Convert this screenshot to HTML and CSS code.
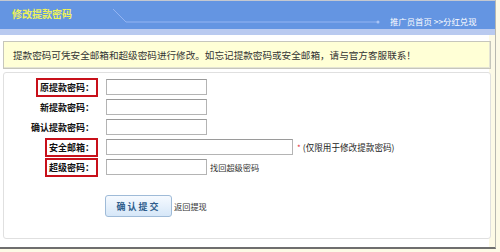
FILE: index.html
```html
<!DOCTYPE html>
<html lang="zh-CN">
<head>
  <meta charset="UTF-8">
  <title>修改提款密码</title>
  <link rel="stylesheet" href="styles.css">
</head>
<body>
  <div class="page">
    <div class="head">
      <h1>修改提款密码</h1>
      <svg class="deco" width="272" height="28" viewBox="0 0 272 28">
        <path d="M3 8 L16 21 L268 21" fill="none" stroke="#93b4f2" stroke-width="1"/>
        <circle cx="268" cy="21" r="1.5" fill="#a9c4f6"/>
      </svg>
      <div class="crumbs">推广员首页 &gt;&gt;分红兑现</div>
    </div>
    <div class="strip"></div>

    <div class="content">
      <div class="notice">提款密码可凭安全邮箱和超级密码进行修改。如忘记提款密码或安全邮箱，请与官方客服联系！</div>

      <div class="panel">
        <div class="form">
          <div class="label"><span class="mark">原提款密码：</span></div>
          <div class="field"><input type="password" class="box"></div>

          <div class="label"><span>新提款密码：</span></div>
          <div class="field"><input type="password" class="box"></div>

          <div class="label"><span>确认提款密码：</span></div>
          <div class="field"><input type="password" class="box"></div>

          <div class="label"><span class="mark">安全邮箱：</span></div>
          <div class="field"><input type="text" class="box wide"><span class="star">*</span><span class="hint">(仅限用于修改提款密码)</span></div>

          <div class="label"><span class="mark">超级密码：</span></div>
          <div class="field"><input type="password" class="box"><a class="link">找回超级密码</a></div>
        </div>

        <div class="actions">
          <button class="submit">确认提交</button>
          <a class="link">返回提现</a>
        </div>
      </div>
    </div>
  </div>
</body>
</html>
```

FILE: styles.css
```css
* {
  margin: 0;
  padding: 0;
  box-sizing: border-box;
}

body {
  background: #fdfae6;
  font-family: "Noto Sans CJK SC", "DejaVu Sans", sans-serif;
  font-size: 9px;
  color: #222;
}

.page {
  width: 496px;
  height: 249px;
  background: #fff;
  border-top: 1px solid #c4c8d0;
  border-right: 1px solid #b8b8b0;
  border-bottom: 2px solid #6e6e6e;
}

.head {
  height: 28px;
  background: #6495e2;
  display: flex;
  align-items: flex-start;
}

.head h1 {
  font-size: 10px;
  font-weight: bold;
  color: #eef25a;
  margin: 6px 0 0 12px;
  line-height: 14px;
}

.deco {
  margin-left: 38px;
  flex: none;
}

.crumbs {
  color: #fff;
  font-size: 8.4px;
  margin: 13px 0 0 8px;
  line-height: 14px;
  white-space: nowrap;
}

.strip {
  height: 6px;
  background: #b9caf0;
}

.content {
  padding: 6px 4px 0 3px;
  background: linear-gradient(90deg, #fff 489px, #fdfae6 489px);
  height: 212px;
}

.notice {
  height: 28px;
  line-height: 26px;
  background: #ffffd6;
  border: 1px solid #c6c6bc;
  box-shadow: inset -1px -1px 0 #e4e4d4;
  padding-left: 9px;
  font-size: 9.6px;
  color: #333;
  white-space: nowrap;
}

.panel {
  margin-top: 3px;
  height: 167px;
  border: 1px solid #e0e0e0;
  border-radius: 3px;
  background: #fff;
}

.form {
  display: grid;
  grid-template-columns: 94px 1fr;
  grid-auto-rows: 20px;
  column-gap: 8px;
  padding-top: 4px;
}

.label {
  display: flex;
  justify-content: flex-end;
  align-items: center;
  font-weight: bold;
  color: #111;
}

.label span {
  padding: 1px 2px;
  border: 2px solid transparent;
  line-height: 13px;
}

.label .mark {
  border-color: #c8101a;
}

.field {
  display: flex;
  align-items: center;
}

.box {
  width: 101px;
  height: 16px;
  border: 1px solid #b4b4b4;
  border-top-color: #9a9a9a;
  background: #fff;
}

.box.wide {
  width: 187px;
}

.star {
  color: #e0303a;
  margin: 0 2px 0 4px;
  font-size: 8px;
}

.hint {
  color: #222;
  font-size: 8.6px;
}

.link {
  color: #333;
  margin-left: 3px;
  font-size: 8.2px;
}

.actions {
  display: flex;
  align-items: center;
  margin: 18px 0 0 101px;
}

.submit {
  width: 67px;
  height: 22px;
  border: 1px solid #9fbbd8;
  border-radius: 3px;
  background: linear-gradient(#f6faff, #d6e7f8);
  font-family: inherit;
  font-size: 9px;
  font-weight: bold;
  color: #2f5d8c;
  letter-spacing: 2px;
}

.actions .link {
  margin-left: 2px;
}
```
